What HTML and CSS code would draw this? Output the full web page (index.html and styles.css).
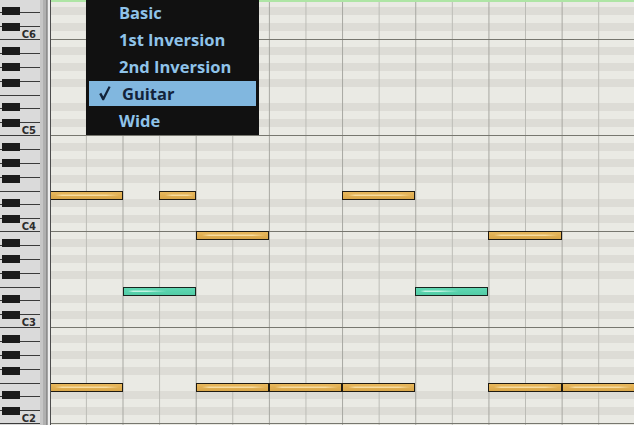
FILE: index.html
```html
<!DOCTYPE html>
<html>
<head>
<meta charset="utf-8">
<link rel="stylesheet" href="styles.css">
</head>
<body>
<div class="editor">
  <div class="keyboard">
    <div class="group lower">
      <div class="wkey"></div>
      <div class="wkey"></div>
      <div class="wkey"><span class="label">C6</span></div>
      <div class="bkey k8"></div>
      <div class="bkey k24"></div>
    </div>
    <div class="group upper">
      <div class="wkey"></div><div class="wkey"></div><div class="wkey"></div><div class="wkey"></div>
      <div class="bkey k8"></div><div class="bkey k24"></div><div class="bkey k40"></div>
    </div>
    <div class="group lower">
      <div class="wkey"></div><div class="wkey"></div>
      <div class="wkey"><span class="label">C5</span></div>
      <div class="bkey k8"></div><div class="bkey k24"></div>
    </div>
    <div class="group upper">
      <div class="wkey"></div><div class="wkey"></div><div class="wkey"></div><div class="wkey"></div>
      <div class="bkey k8"></div><div class="bkey k24"></div><div class="bkey k40"></div>
    </div>
    <div class="group lower">
      <div class="wkey"></div><div class="wkey"></div>
      <div class="wkey"><span class="label">C4</span></div>
      <div class="bkey k8"></div><div class="bkey k24"></div>
    </div>
    <div class="group upper">
      <div class="wkey"></div><div class="wkey"></div><div class="wkey"></div><div class="wkey"></div>
      <div class="bkey k8"></div><div class="bkey k24"></div><div class="bkey k40"></div>
    </div>
    <div class="group lower">
      <div class="wkey"></div><div class="wkey"></div>
      <div class="wkey"><span class="label">C3</span></div>
      <div class="bkey k8"></div><div class="bkey k24"></div>
    </div>
    <div class="group upper">
      <div class="wkey"></div><div class="wkey"></div><div class="wkey"></div><div class="wkey"></div>
      <div class="bkey k8"></div><div class="bkey k24"></div><div class="bkey k40"></div>
    </div>
    <div class="group lower">
      <div class="wkey"></div><div class="wkey"></div>
      <div class="wkey"><span class="label">C2</span></div>
      <div class="bkey k8"></div><div class="bkey k24"></div>
    </div>
    <div class="group upper">
      <div class="wkey"></div><div class="wkey"></div><div class="wkey"></div><div class="wkey"></div>
      <div class="bkey k8"></div><div class="bkey k24"></div><div class="bkey k40"></div>
    </div>
  </div>
  <div class="gutter"></div>
  <div class="roll">
    <div class="notes">
      <div class="note" style="grid-area: 25 / 1 / 26 / 3"></div>
      <div class="note" style="grid-area: 25 / 4 / 26 / 5"></div>
      <div class="note" style="grid-area: 25 / 9 / 26 / 11"></div>
      <div class="note" style="grid-area: 30 / 5 / 31 / 7"></div>
      <div class="note" style="grid-area: 30 / 13 / 31 / 15"></div>
      <div class="note green" style="grid-area: 37 / 3 / 38 / 5"></div>
      <div class="note green" style="grid-area: 37 / 11 / 38 / 13"></div>
      <div class="note" style="grid-area: 49 / 1 / 50 / 3"></div>
      <div class="note" style="grid-area: 49 / 5 / 50 / 7"></div>
      <div class="note" style="grid-area: 49 / 7 / 50 / 9"></div>
      <div class="note" style="grid-area: 49 / 9 / 50 / 11"></div>
      <div class="note" style="grid-area: 49 / 13 / 50 / 15"></div>
      <div class="note" style="grid-area: 49 / 15 / 50 / 17"></div>
    </div>
  </div>
</div>
<div class="menu">
  <div class="item"><span class="check"></span><span class="text">Basic</span></div>
  <div class="item"><span class="check"></span><span class="text">1st Inversion</span></div>
  <div class="item"><span class="check"></span><span class="text">2nd Inversion</span></div>
  <div class="item selected"><span class="check"><svg width="12" height="15" viewBox="0 0 12 15"><path d="M0.2 8 L2.3 6.8 L4.3 10.4 L9.6 0.2 L11.6 1.1 L5 14.2 L3.4 14.2 Z" fill="#13233a"/></svg></span><span class="text">Guitar</span></div>
  <div class="item"><span class="check"></span><span class="text">Wide</span></div>
</div>
</body>
</html>
```

FILE: styles.css
```css
html, body {
  margin: 0;
  padding: 0;
}
body {
  width: 634px;
  height: 425px;
  overflow: hidden;
  position: relative;
  background: #e9e9e3;
}
.editor {
  display: flex;
  height: 430px;
  margin-top: -1px;
}
.keyboard {
  width: 40px;
  flex: none;
  background: #dadada;
  overflow: hidden;
}
.group {
  position: relative;
  display: flex;
  flex-direction: column;
}
.group.upper { height: 56px; }
.group.lower { height: 40px; }
.wkey {
  flex: 1;
  border-top: 1px solid #3a3a3a;
  display: flex;
  justify-content: flex-end;
  align-items: flex-end;
}
.keyboard > .group:first-child .wkey:first-child {
  border-top-color: transparent;
}
.label {
  font-family: "DejaVu Sans", sans-serif;
  font-weight: bold;
  font-size: 10px;
  line-height: 9px;
  color: #2c2c2c;
  padding-right: 4px;
}
.bkey {
  position: absolute;
  left: 2px;
  width: 18px;
  height: 8px;
  background: #1b1b1b;
}
.k8 { top: 8px; }
.k24 { top: 24px; }
.k40 { top: 40px; }
.gutter {
  width: 11px;
  flex: none;
  background: linear-gradient(to right,
    #c6c6c6 0 3px,
    #b0b0b0 3px 6px,
    #8e8e8e 6px 7px,
    #a4a4a4 7px 8px,
    #eeeeee 8px 10px,
    #4c4c4c 10px 11px);
}
.roll {
  flex: 1;
  overflow: hidden;
  background:
    linear-gradient(#aee5a5, #aee5a5) 0 0 / 100% 3px no-repeat,
    linear-gradient(to bottom, #77776f 0 1px, transparent 1px) 0 40px / 100% 96px repeat,
    linear-gradient(to right, #a7a7a1 0 1px, transparent 1px) -1.7px 0 / 73.2px 100% repeat,
    linear-gradient(to right, #bcbcb6 0 1px, transparent 1px) 34.9px 0 / 73.2px 100% repeat,
    linear-gradient(to bottom,
      #eaeae4 0 8px, #dddcd6 8px 16px,
      #eaeae4 16px 24px, #dddcd6 24px 32px,
      #eaeae4 32px 40px, #dddcd6 40px 48px,
      #eaeae4 48px 64px, #dddcd6 64px 72px,
      #eaeae4 72px 80px, #dddcd6 80px 88px,
      #eaeae4 88px 96px) 0 40px / 100% 96px repeat;
}
.notes {
  display: grid;
  grid-template-columns: repeat(16, 36.6px);
  grid-template-rows: repeat(54, 8px);
  margin-left: -1.7px;
}
.note {
  align-self: start;
  height: 9px;
  box-sizing: border-box;
  border: 1px solid #1e1a12;
  background:
    linear-gradient(to right, transparent 0 5px, #f7dc9f 12px, #f7dc9f 78%, transparent 96%) 0 3px / 100% 1px no-repeat,
    linear-gradient(to right, transparent 0 5px, rgba(247,220,159,0.5) 12px, rgba(247,220,159,0.5) 78%, transparent 96%) 0 2px / 100% 1px no-repeat,
    linear-gradient(#e8b85c, #d9a649);
}
.note.green {
  border-color: #18251f;
  background:
    linear-gradient(to right, transparent 0 4px, #c4f4e3 9px, #c4f4e3 32%, transparent 60%) 0 3px / 100% 1px no-repeat,
    linear-gradient(to right, transparent 0 4px, rgba(196,244,227,0.5) 9px, rgba(196,244,227,0.5) 32%, transparent 60%) 0 2px / 100% 1px no-repeat,
    linear-gradient(#5fd7b2, #52cca6);
}
.menu {
  position: absolute;
  left: 86px;
  top: 0;
  width: 173px;
  height: 135px;
  box-sizing: border-box;
  padding: 0 3px;
  background: #111111;
  display: flex;
  flex-direction: column;
  gap: 2px;
}
.item {
  height: 25px;
  display: flex;
  align-items: center;
  font-family: "Open Sans", sans-serif;
  font-weight: 700;
  font-size: 16.5px;
  line-height: 25px;
  color: #8fc3e9;
}
.check {
  width: 30px;
  flex: none;
  display: flex;
  justify-content: flex-start;
  padding-left: 10px;
  box-sizing: border-box;
}
.check svg { display: block; }
.item.selected {
  background: #81b7df;
  color: #13233a;
}
.item.selected .text {
  margin-left: 3px;
}
.text {
  position: relative;
  top: -0.5px;
}
```
